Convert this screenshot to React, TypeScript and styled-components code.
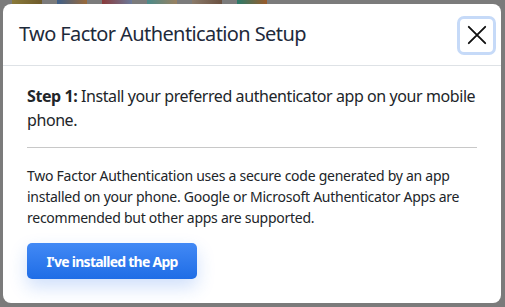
import React from "react";
import styled, { createGlobalStyle } from "styled-components";

const Global = createGlobalStyle`
  html, body { margin: 0; padding: 0; }
  body {
    width: 505px;
    height: 307px;
    overflow: hidden;
    font-family: "Noto Sans", "Open Sans", sans-serif;
    background: #7b7b7b;
  }
`;

const Backdrop = styled.div`
  position: relative;
  width: 505px;
  height: 307px;
  background: #7b7b7b;
  overflow: hidden;
`;

const ThumbRow = styled.div`
  display: flex;
  gap: 15px;
  padding-left: 12px;
`;

const Thumb = styled.div<{ $c1: string; $c2: string }>`
  width: 30px;
  height: 10px;
  background: linear-gradient(90deg, ${(p) => p.$c1}, ${(p) => p.$c2});
`;

const Dialog = styled.div`
  position: absolute;
  left: 3px;
  top: 4px;
  width: 498px;
  height: 299px;
  background: #fff;
  border-radius: 8px;
  display: flex;
  flex-direction: column;
  overflow: hidden;
`;

const Header = styled.div`
  display: flex;
  align-items: center;
  justify-content: space-between;
  height: 62px;
  padding: 0 5px 0 16px;
  border-bottom: 1px solid #dee2e6;
  box-sizing: border-box;
`;

const Title = styled.h1`
  margin: 0 0 3px 0;
  font-size: 20px;
  font-weight: 400;
  color: #1e2a3b;
  letter-spacing: -0.6px;
`;

const CloseButton = styled.button`
  width: 39px;
  height: 39px;
  border: 3px solid #c6daf8;
  border-radius: 7px;
  background: #fff;
  display: flex;
  align-items: center;
  justify-content: center;
  padding: 0;
  margin-top: 1px;
`;

const Body = styled.div`
  padding: 18px 10px 0 24px;
  display: flex;
  flex-direction: column;
`;

const Lead = styled.p`
  margin: 0;
  font-size: 16px;
  line-height: 24px;
  color: #212529;
  letter-spacing: -0.42px;
`;

const LeadLabel = styled.strong`
  font-weight: 700;
`;

const Rule = styled.hr`
  margin: 15px 14px 17px 0;
  border: 0;
  border-top: 1px solid #c8c8c8;
`;

const Para = styled.p`
  margin: 0;
  font-size: 14px;
  line-height: 21px;
  color: #212529;
  letter-spacing: -0.26px;
  padding-right: 14px;
`;

const PrimaryButton = styled.button`
  margin-top: 15px;
  align-self: flex-start;
  width: 170px;
  height: 36px;
  border: 0;
  border-radius: 5px;
  background: linear-gradient(180deg, #4289f5 0%, #1f6de6 100%);
  color: #fff;
  font-family: inherit;
  font-weight: 700;
  font-size: 14px;
  letter-spacing: -0.75px;
  box-shadow: 0 8px 18px rgba(37, 110, 235, 0.22);
`;

export default function App() {
  return (
    <>
      <Global />
      <Backdrop>
        <ThumbRow>
          <Thumb $c1="#8a7a3a" $c2="#6e5a2a" />
          <Thumb $c1="#3d5f8a" $c2="#9a6a3a" />
          <Thumb $c1="#8a3a3a" $c2="#6a7a9a" />
          <Thumb $c1="#4a8a8a" $c2="#9a8060" />
          <Thumb $c1="#8a7a6a" $c2="#6a5040" />
          <Thumb $c1="#2a7a6a" $c2="#9a5a2a" />
        </ThumbRow>
        <Dialog role="dialog">
          <Header>
            <Title>Two Factor Authentication Setup</Title>
            <CloseButton aria-label="Close">
              <svg width="20" height="20" viewBox="0 0 20 20">
                <path d="M1.8 1.8 L18.2 18.2 M18.2 1.8 L1.8 18.2" stroke="#111" strokeWidth="1.9" strokeLinecap="round" />
              </svg>
            </CloseButton>
          </Header>
          <Body>
            <Lead>
              <LeadLabel>Step 1:</LeadLabel> Install your preferred authenticator app on your mobile phone.
            </Lead>
            <Rule />
            <Para>
              Two Factor Authentication uses a secure code generated by an app installed on your phone.
              Google or Microsoft Authenticator Apps are recommended but other apps are supported.
            </Para>
            <PrimaryButton>I've installed the App</PrimaryButton>
          </Body>
        </Dialog>
      </Backdrop>
    </>
  );
}
